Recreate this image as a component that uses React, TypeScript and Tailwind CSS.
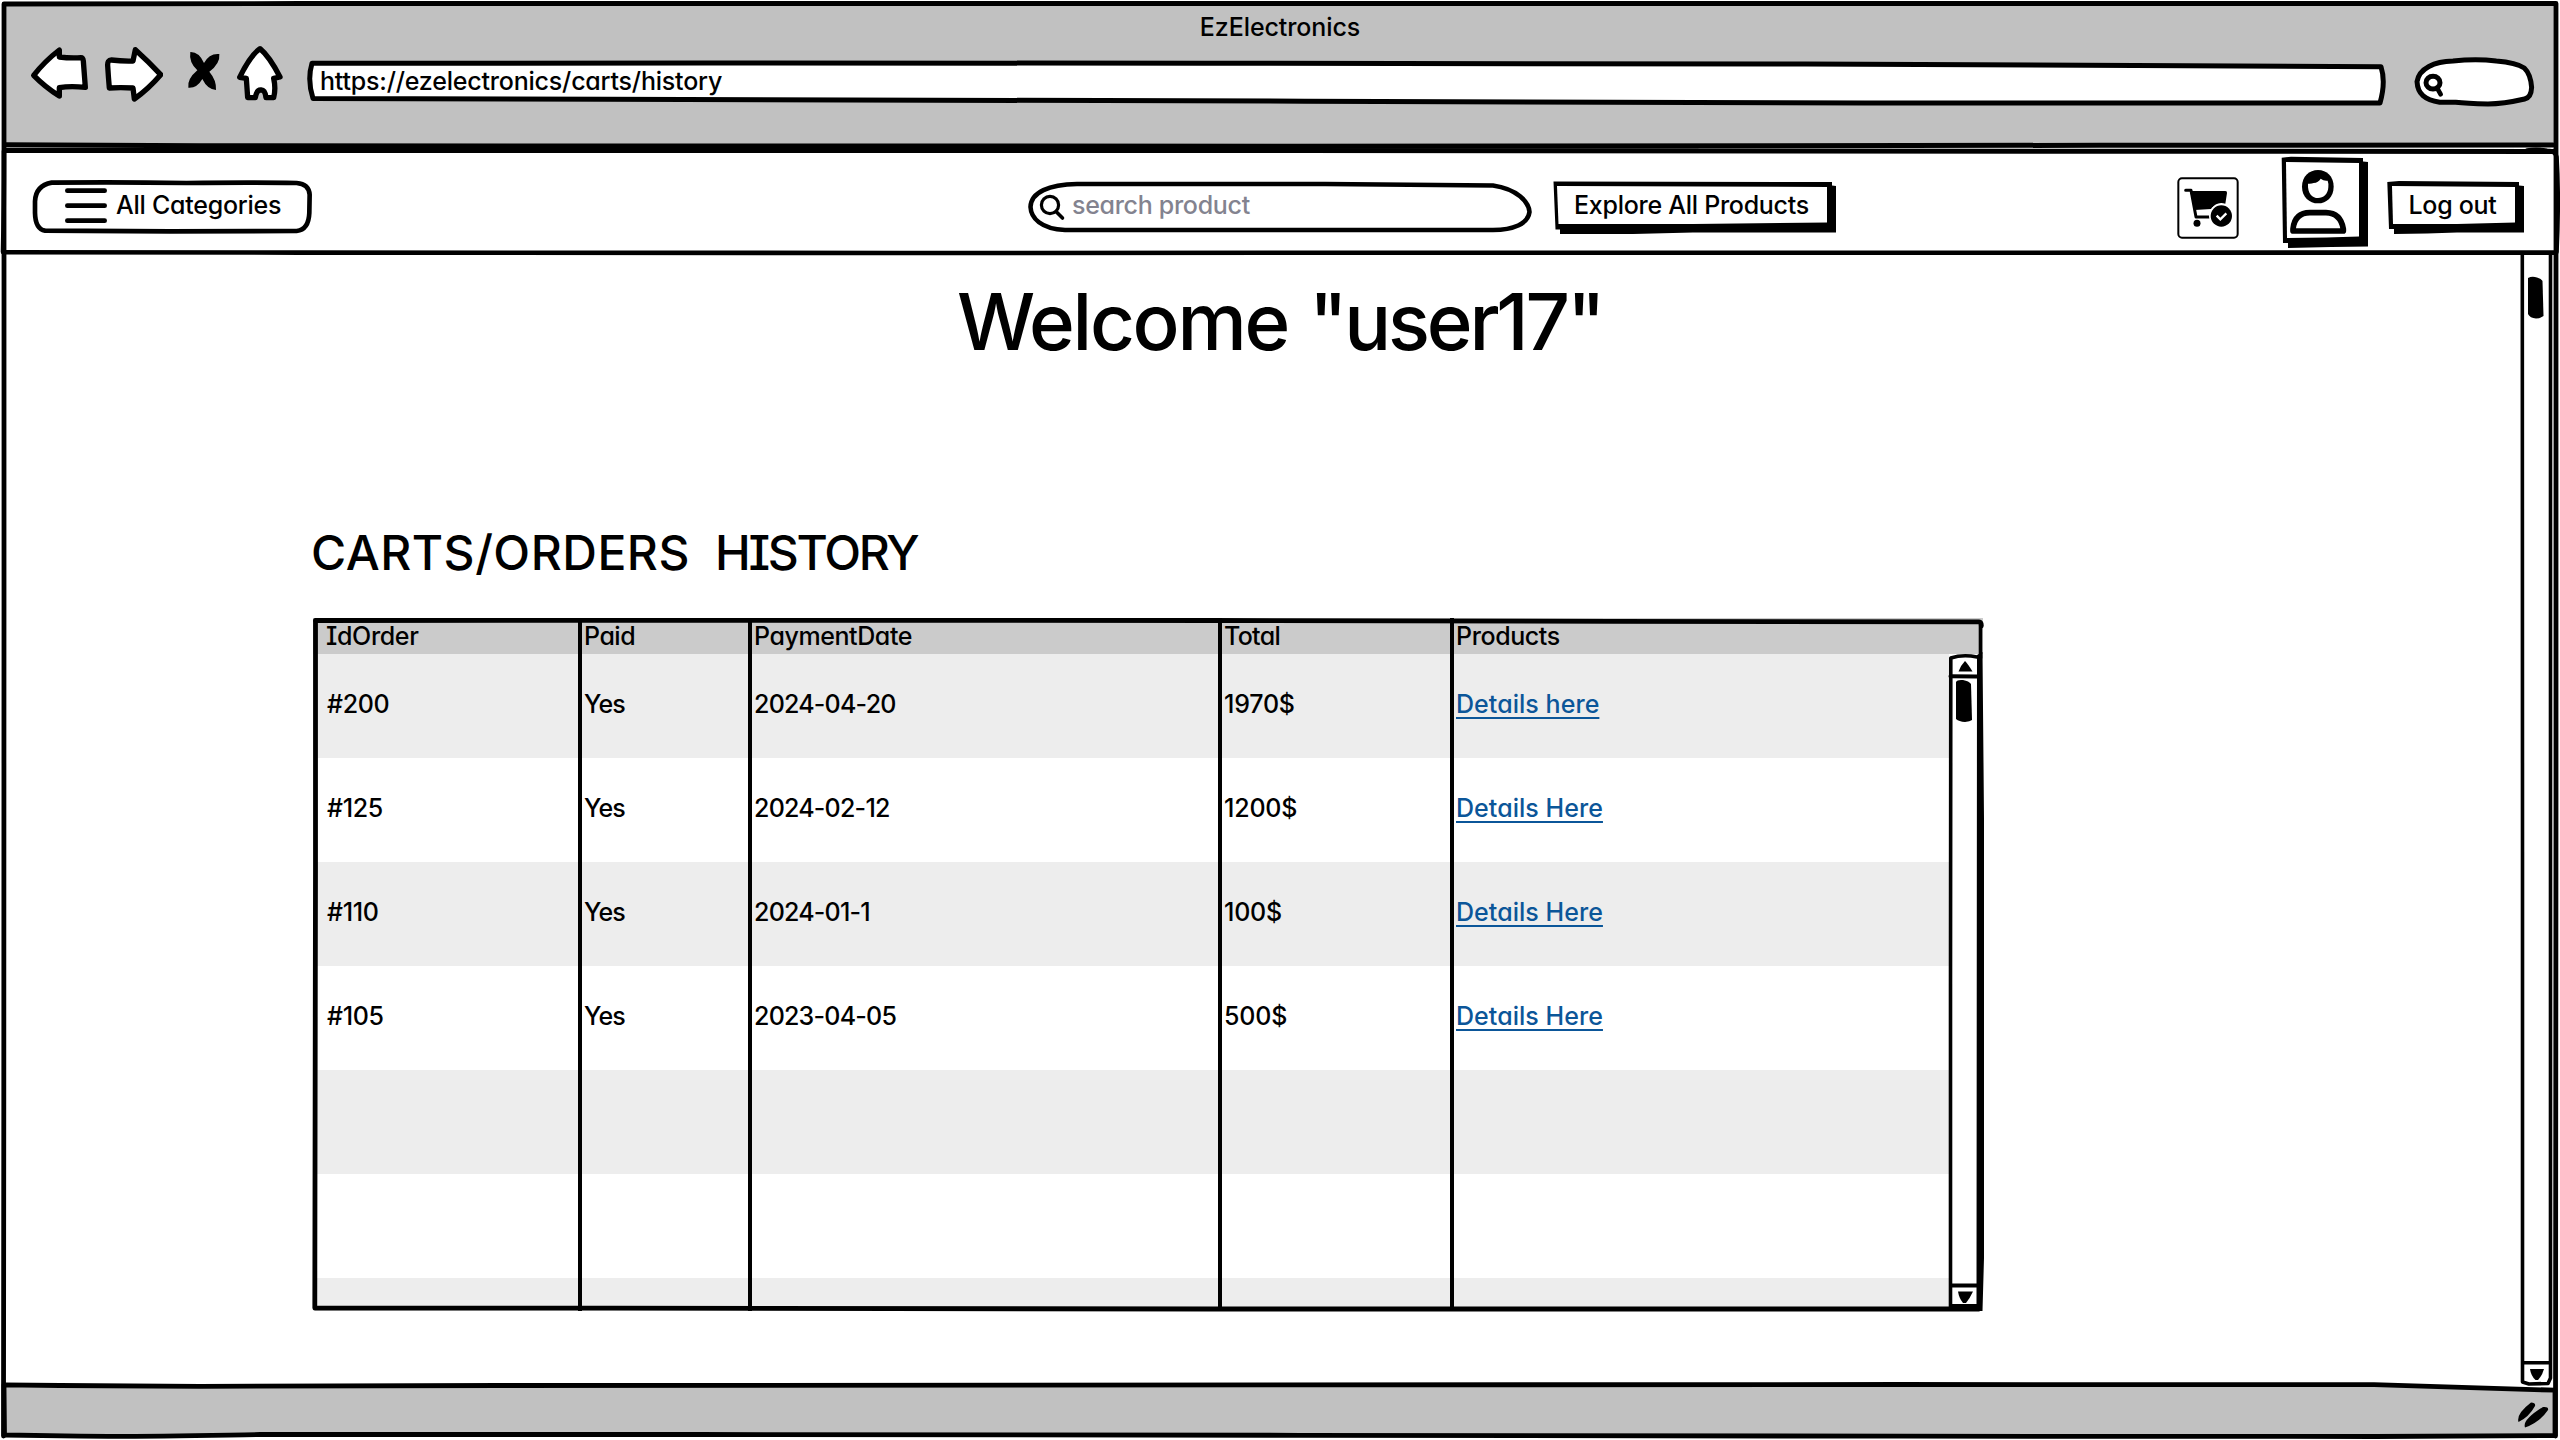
import type { ReactNode } from 'react';

/** Hand-drawn outline laid over its positioned parent. */
function Outline({ children }: { children: ReactNode }) {
  return (
    <svg
      className="pointer-events-none absolute inset-0 h-full w-full overflow-visible"
      fill="none"
      stroke="#000"
      strokeLinecap="round"
      strokeLinejoin="round"
      aria-hidden="true"
    >
      {children}
    </svg>
  );
}

function NavIcons() {
  return (
    <div className="flex h-[60px] fill-white stroke-black stroke-16">
      <svg className="h-[60px] w-[60px]" viewBox="30 30 180 180" strokeLinejoin="round">
        <path d="M41 121Q75 78 118 45L118 66Q150 70 183 68Q189 68 190 78L196 157Q150 152 118 158L118 183Q75 156 41 121Z" />
      </svg>
      <svg className="ml-[13px] h-[60px] w-[60px]" viewBox="250 30 180 180" strokeLinejoin="round">
        <path d="M264 92Q263 75 275 75Q308 79 340 78L347 44Q385 78 423 119Q388 160 344 192L340 159Q302 157 269 159Q266 125 264 92Z" />
      </svg>
      <svg className="ml-[22px] h-[60px] w-[40px]" viewBox="495 30 120 180">
        <path
          className="fill-black stroke-none"
          d="M511 51Q537 50 552 84Q568 54 598 57Q601 86 568 110Q590 136 588 165Q562 163 547 132Q531 160 505 158Q501 132 532 106Q506 82 511 51Z"
        />
      </svg>
      <svg className="ml-[10px] h-[60px] w-[50px]" viewBox="645 30 150 180" strokeLinejoin="round">
        <path d="M720 41Q748 64 780 126L761 130Q768 160 761 188L738 188Q735 164 723 165Q710 164 706 188L683 188L679 130L659 127Q690 62 720 41Z" />
      </svg>
    </div>
  );
}

function BrowserBar() {
  return (
    <header className="relative flex h-[146px] flex-col px-[4px]">
      <div className="absolute inset-x-[3px] inset-y-0 bg-[#c1c1c1]" />
      <div className="relative pt-[12px] text-center text-[25px] leading-6 tracking-[-0.1px]">EzElectronics</div>
      <div className="relative mt-[6px] flex items-start pl-[26px]">
        <NavIcons />
        <div className="relative mt-[15px] ml-[20px] h-[47px] w-[2082px] pt-[9px] pl-[15px]">
          <Outline>
            <path
              fill="#fff"
              strokeWidth="5"
              d="M7 3.3L400 3L900 3.2L1500 4L2076 6.7Q2081 22 2075 43L1560 43L1000 41.2L300 39.2L8 38.5Q2 20 7 3.3Z"
            />
          </Outline>
          <span className="relative block text-[25px] leading-6 tracking-[-0.2px]">
            https://ezelectronics/carts/history
          </span>
        </div>
        <svg
          className="mt-[10px] ml-[26px] h-[53.3px] w-[123.3px]"
          viewBox="940 165 370 160"
          stroke="#000"
          strokeWidth="15"
          strokeLinecap="round"
          strokeLinejoin="round"
        >
          <path
            fill="#fff"
            d="M952 245C958 205 1005 184 1060 183Q1130 176 1190 183Q1250 188 1274 204Q1293 222 1296 262Q1295 292 1275 297Q1210 312 1165 312Q1100 311 1068 307L1020 307C975 300 954 282 952 245Z"
          />
          <ellipse cx="1000" cy="248" rx="21" ry="19" fill="none" strokeWidth="15" />
          <path d="M1013 265L1023 283" fill="none" strokeWidth="14" />
        </svg>
      </div>
    </header>
  );
}

function CartIcon() {
  return (
    <svg className="relative h-[62px] w-[62px]" viewBox="231 532 186 186">
      <rect x="235" y="536" width="178" height="178" rx="11" fill="#fff" stroke="#000" strokeWidth="6" />
      <path d="M257 572H273L288 652H328" fill="none" stroke="#000" strokeWidth="9" strokeLinecap="round" strokeLinejoin="round" />
      <path d="M270 574H376Q382 574 381 580L376 612Q350 604 333 628L284 631Z" />
      <circle cx="291" cy="671" r="10.5" />
      <circle cx="364" cy="649" r="37" fill="#fff" />
      <circle cx="364" cy="649" r="32" />
      <path d="M350 648L361 659L379 641" fill="none" stroke="#fff" strokeWidth="7" />
    </svg>
  );
}

function AvatarIcon() {
  return (
    <svg className="relative h-[66px] w-[58px]" viewBox="567 508 174 198">
      <path d="M654 511C680 511 701 530 701 561C701 592 680 611 654 611C628 611 606 592 606 561C606 530 628 511 654 511Z" />
      <path d="M624 552Q634 553 641 550Q655 549 662 537Q672 545 683 543Q686 550 685 563C684 584 670 595 654 595C638 595 622 582 624 552Z" fill="#fff" />
      <path
        d="M579 694V688Q584 639 630 639H678Q722 640 730 688V694Z"
        fill="#fff"
        stroke="#000"
        strokeWidth="17"
        strokeLinejoin="round"
      />
    </svg>
  );
}

function TopNav() {
  return (
    <nav className="relative flex h-[103px] items-start pl-[30px]">
      <Outline>
        <path stroke="#fff" strokeWidth="3" d="M1700 -.6H2552" />
        <path strokeWidth="5" d="M5 -4.200L200 -3.200L1300 -2.800L2100 -3.700L2553 -4" />
        <path fill="#fff" stroke="none" d="M4 2H2556V103H4Z" />
        <path strokeWidth="5" d="M5 1.500L1300 1.500L2100 2.200L2555 2.600" />
        <path strokeWidth="4.600" d="M2527 1.500Q2537 0 2547 1.800Q2556 2 2556.500 8Q2559 50 2556.500 103" />
        <path strokeWidth="4.600" d="M4 103.200L300 103.600L900 104L1300 103.800L2555 103.600" />
        <path strokeWidth="4.600" d="M4 2Q4 60 3 103" />
      </Outline>

      <button className="relative mt-[29px] flex h-[58px] w-[287px] text-left">
        <svg className="absolute inset-0 h-[58.33px] w-[286.67px]" viewBox="30 25 860 175" fill="none" stroke="#000" strokeWidth="14" strokeLinecap="round">
          <path d="M95 39Q300 37 500 40Q700 38 830 40Q867 43 869 75L868 130Q866 180 830 184L450 185L75 183Q46 178 45 130L45 95Q47 48 95 39Z" />
          <path d="M142 63H254M142 108H254M142 153H254" />
        </svg>
        <span className="relative mt-[15px] ml-[86px] text-[25px] leading-6 tracking-[-0.25px]">All Categories</span>
      </button>

      <label className="relative mt-[29px] ml-[708px] flex h-[58px] w-[510px]">
        <Outline>
          <path
            strokeWidth="4.6"
            d="M52 6L300 6L468 7.500C492 11 504 24 504.500 34C503 46 488 52 468 52L180 52L40 52C16 51 6 40 5.500 29C6 14 24 6.500 52 6Z"
          />
          <circle cx="25" cy="27" r="8.600" strokeWidth="3.200" />
          <path strokeWidth="3.600" d="M31.500 34L37.500 40" />
        </Outline>
        <span className="relative mt-[15px] ml-[47px] text-[25px] leading-6 tracking-[-0.3px] text-[#83838f]">
          search product
        </span>
      </label>

      <button className="relative mt-[32px] ml-[18px] flex h-[53px] w-[283px]">
        <Outline>
          <path fill="#000" stroke="none" d="M.5 .5L279 1V4.500L283 5V51.500L140 51.500L80 53H7V48.500H2.500Z" />
          <path fill="#fff" stroke="none" d="M4 5L150 5.500L274 6V41.500L140 43L5.500 43Z" />
        </Outline>
        <span className="relative mt-[12px] ml-[21px] text-[25px] leading-6 tracking-[-0.27px]">Explore All Products</span>
      </button>

      <div className="mt-[28px] ml-[341px]">
        <CartIcon />
      </div>

      <button className="relative mt-[8px] ml-[42px] flex h-[91px] w-[87px]">
        <Outline>
          <path fill="#000" stroke="none" d="M.7 .7L10 -.3L82 1V4.500L87 5V89.500L50 90L7 91V86H2Z" />
          <path fill="#fff" stroke="none" d="M5 5L78 6V79.500L45 80.500L6 81Z" />
        </Outline>
        <div className="mt-[12px] ml-[8px]">
          <AvatarIcon />
        </div>
      </button>

      <button className="relative mt-[32px] ml-[19px] flex h-[53px] w-[137px]">
        <Outline>
          <path fill="#000" stroke="none" d="M.3 1L12 0L132 1V4.500L137 5V51.500L70 51.500L40 52.500L7 53V48H2Z" />
          <path fill="#fff" stroke="none" d="M5 5L128 6V41.500L70 43L6 43Z" />
        </Outline>
        <span className="relative mt-[12px] ml-[21.5px] text-[25px] leading-6 tracking-[-0.3px]">Log out</span>
      </button>
    </nav>
  );
}

const orders = [
  { id: '#200', paid: 'Yes', date: '2024-04-20', total: '1970$', link: 'Details here' },
  { id: '#125', paid: 'Yes', date: '2024-02-12', total: '1200$', link: 'Details Here' },
  { id: '#110', paid: 'Yes', date: '2024-01-1', total: '100$', link: 'Details Here' },
  { id: '#105', paid: 'Yes', date: '2023-04-05', total: '500$', link: 'Details Here' },
  { id: '', paid: '', date: '', total: '', link: '' },
  { id: '', paid: '', date: '', total: '', link: '' },
  { id: '', paid: '', date: '', total: '', link: '' },
];

const columns = 'grid grid-cols-[265px_170px_470px_232px_1fr]';
const cell = 'border-l-4 border-black pl-[2px]';

function OrdersTable() {
  return (
    <section className="relative mt-[41px] ml-[313px] flex h-[693px] w-[1670px] flex-col">
      <div className={`${columns} h-[36px] shrink-0 bg-[#cbcbcb] leading-6 *:pt-[6px]`}>
        <div className="pl-[13px] tracking-[-0.35px]">IdOrder</div>
        <div className={`${cell} tracking-[-0.5px]`}>Paid</div>
        <div className={`${cell} tracking-[-0.42px]`}>PaymentDate</div>
        <div className={`${cell} tracking-[-0.7px]`}>Total</div>
        <div className={`${cell} tracking-[-0.4px]`}>Products</div>
      </div>
      <div className="flex min-h-0 flex-1">
        <div className="flex w-[1636px] flex-col overflow-hidden">
          {orders.map((o, i) => (
            <div key={i} className={`${columns} h-[104px] shrink-0 leading-6 odd:bg-[#ededed] *:pt-[38px]`}>
              <div className="pl-[14px] tracking-[-0.3px]">{o.id}</div>
              <div className={`${cell} tracking-[-0.8px]`}>{o.paid}</div>
              <div className={`${cell} tracking-[-0.78px]`}>{o.date}</div>
              <div className={`${cell} tracking-[-0.2px]`}>{o.total}</div>
              <div className={cell}>
                <a className="tracking-[0.05px] text-[#0b5699] underline decoration-2 underline-offset-[3.5px] [text-decoration-skip-ink:none]">
                  {o.link}
                </a>
              </div>
            </div>
          ))}
        </div>
        <div className="relative mb-[2px] flex-1 bg-white">
          <Outline>
            <path strokeWidth="3.600" d="M1.500 653V330L1.800 4Q14 0 28 3" />
            <path strokeWidth="4" d="M1.500 22.200L28 22.500M2 631.500H28" />
            <path fill="#000" stroke="none" d="M16 7Q19 10 23.500 17.500H9.500Q12 11 16 7Z" />
            <path fill="#000" stroke="none" d="M7 28Q8 25.500 14 26Q20 27 22 30L23 66Q21 67.500 16 68Q10 67.500 7 65Z" />
            <path fill="#000" stroke="none" d="M9 637.500H24Q21 644 17 649H14Q10 644 9 637.500Z" />
          </Outline>
        </div>
      </div>
      <Outline>
        <path strokeWidth="4.800" d="M2.500 2.500L300 2.300L900 2.500L1300 3.300L1666 3.800Q1668.500 4 1668.300 8" />
        <path strokeWidth="4.800" d="M2.500 3L2.500 250L1.800 690L300 690.200L900 691L1666 691" />
        <path strokeWidth="3.600" d="M1667.500 6V40" />
        <path fill="#000" stroke="none" d="M1664 37L1669.500 34L1671 200V640L1669.500 693H1638V686H1663.500Z" />
      </Outline>
    </section>
  );
}

function PageScrollbar() {
  return (
    <div className="relative mb-[1px] w-[32px]">
      <Outline>
        <path strokeWidth="3.600" d="M1.300 2L1.500 600L1.500 1130L8 1132L27 1131.500L29.500 1126V2" />
        <path strokeWidth="3.600" d="M2 1110.800H29" />
        <path fill="#000" stroke="none" d="M7 26Q11 24 16 25.500Q21 27 21.500 29L22.500 64Q19 66.500 15 66.500Q9 66 7 62Z" />
        <path fill="#000" stroke="none" d="M9 1117H23Q21 1124 17 1128H14.500Q10 1124 9 1117Z" />
      </Outline>
    </div>
  );
}

function StatusBar() {
  return (
    <footer className="relative h-[56px]">
      <Outline>
        <path
          fill="#c1c1c1"
          strokeWidth="4.800"
          d="M4 .8L60 1.500L200 2.300L500 1.500L1900 .5L2374 .7L2555 6.200V51.500L2374 52.500L1900 52.200L1300 51.300L700 50.500L260 50.500C200 51.500 150 52.800 80 52.200L4.500 51Z"
        />
        <path
          fill="#000"
          stroke="none"
          d="M2531 18.500Q2536 19 2535 22Q2529 33 2518.500 38Q2516 30 2531 18.500ZM2543 23Q2549 22.500 2548 26Q2540 38 2525 43.500Q2522 36 2543 23Z"
        />
      </Outline>
    </footer>
  );
}

export default function App() {
  return (
    <div className="relative flex h-[1440px] w-[2560px] flex-col overflow-hidden bg-white pt-[3px] font-['Inter',sans-serif] text-[25px] font-medium text-black [font-feature-settings:'cv11','cv08']">
      <BrowserBar />
      <TopNav />
      <div className="flex h-[1132px]">
        <main className="w-[2521px]">
          <h1 className="flex gap-[21px] pt-[31px] pl-[957px] text-[78px] leading-[78px] whitespace-nowrap">
            <span className="tracking-[-2.3px]">Welcome</span>
            <span className="tracking-[-3.2px]">"user17"</span>
          </h1>
          <h2 className="mt-[168px] flex gap-[25px] pl-[311px] text-[48px] leading-[48px]">
            <span className="tracking-[0.5px]">CARTS/ORDERS</span>
            <span className="tracking-[-2.3px]">HISTORY</span>
          </h2>
          <OrdersTable />
        </main>
        <PageScrollbar />
      </div>
      <StatusBar />
      <Outline>
        <path strokeWidth="4.800" d="M3.500 1436L3.800 1100L4 600V4L300 3.500H2556V800L2555.500 1436" />
      </Outline>
    </div>
  );
}
